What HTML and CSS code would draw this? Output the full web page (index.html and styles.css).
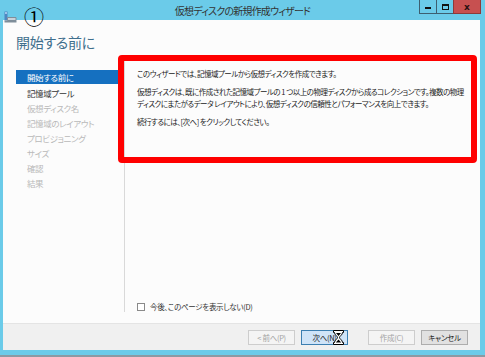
FILE: index.html
```html
<!DOCTYPE html>
<html lang="ja">
<head>
    <meta charset="UTF-8">
    <title>仮想ディスクの新規作成ウィザード</title>
    <link rel="stylesheet" href="styles.css">
</head>
<body>
    <div class="titlebar">
        <div class="app-icon">
            <svg width="13" height="12" viewBox="0 0 13 12">
                <rect x="0.5" y="0.5" width="3" height="9" fill="#4f86c0"/>
                <rect x="1" y="1" width="2" height="2" fill="#9cc3ea"/>
                <path d="M3.5 6.5 H12 V9.5 H3.5 Z" fill="#c9d2da" stroke="#7f8e9a" stroke-width="1"/>
                <rect x="0.5" y="9.5" width="12" height="2" fill="#7f8e9a"/>
            </svg>
        </div>
        <div class="title">仮想ディスクの新規作成ウィザード</div>
        <div class="controls">
            <span class="ctl ctl-min"><i></i></span>
            <span class="ctl ctl-max"><i></i></span>
            <span class="ctl ctl-close">x</span>
        </div>
    </div>

    <div class="client">
        <div class="header">
            <h1>開始する前に</h1>
        </div>
        <div class="main">
            <ul class="steps">
                <li class="current">開始する前に</li>
                <li class="done">記憶域プール</li>
                <li>仮想ディスク名</li>
                <li>記憶域のレイアウト</li>
                <li>プロビジョニング</li>
                <li>サイズ</li>
                <li>確認</li>
                <li>結果</li>
            </ul>
            <div class="content">
                <p>このウィザードでは、記憶域プールから仮想ディスクを作成できます。</p>
                <p>仮想ディスクは、既に作成された記憶域プールの 1 つ以上の物理ディスクから成るコレクションです。複数の物理ディスクにまたがるデータ レイアウトにより、仮想ディスクの信頼性とパフォーマンスを向上できます。</p>
                <p>続行するには、[次へ] をクリックしてください。</p>
                <label class="skip"><span class="box"></span>今後、このページを表示しない(D)</label>
            </div>
        </div>
        <div class="footer">
            <span class="btn disabled">&lt; 前へ(P)</span>
            <span class="btn primary">次へ(N)</span>
            <span class="btn disabled gap">作成(C)</span>
            <span class="btn">キャンセル</span>
        </div>
    </div>
    <div class="taskbar"></div>

    <!-- annotation overlays -->
    <div class="marker">①</div>
    <div class="highlight"></div>
    <svg class="cursor" width="11" height="15" viewBox="0 0 11 15">
        <path d="M0.5 0.5 H10.5 V2.5 H9.5 C9.5 5 6.5 6 6.5 7.5 C6.5 9 9.5 10 9.5 12.5 H10.5 V14.5 H0.5 V12.5 H1.5 C1.5 10 4.5 9 4.5 7.5 C4.5 6 1.5 5 1.5 2.5 H0.5 Z" fill="#fff" stroke="#000" stroke-width="1"/>
        <path d="M3 3 H8 L5.5 6 Z M2.8 12.5 L5.5 9.5 L8.2 12.5 Z" fill="#000"/>
    </svg>
</body>
</html>
```

FILE: styles.css
```css
* { box-sizing: border-box; }
body {
    margin: 0;
    width: 485px;
    height: 357px;
    overflow: hidden;
    position: relative;
    background: #6bcbe9;
    font-family: "Noto Sans CJK JP", "Noto Sans", sans-serif;
    font-feature-settings: "palt";
    color: #333;
}
.titlebar {
    height: 20px;
    display: grid;
    grid-template-columns: 1fr auto 1fr;
    align-items: start;
}
.app-icon { padding: 4px 0 0 4px; height: 16px; }
.title {
    font-size: 10px;
    letter-spacing: -0.8px;
    line-height: 22px;
    color: #333;
}
.controls {
    display: flex;
    justify-content: flex-end;
    padding-right: 4px;
}
.ctl {
    height: 14px;
    width: 18px;
    border: 1px solid #3d5f70;
    border-top: none;
    margin-left: -1px;
    display: flex;
    align-items: center;
    justify-content: center;
    font-family: "DejaVu Sans", sans-serif;
}
.ctl-min i { width: 6px; height: 2px; background: #111; margin-top: 3px; }
.ctl-max i { width: 7px; height: 6px; border: 1px solid #111; border-top-width: 2px; }
.ctl-close {
    width: 28px;
    background: #c75050;
    border-color: #8e3a3a;
    font-size: 9px;
    font-weight: bold;
    color: #2a1010;
    line-height: 12px;
}
.client {
    margin: 0 5px 0 3px;
    height: 330px;
    background: #fcfcfc;
    display: flex;
    flex-direction: column;
}
.header { height: 40px; padding: 14px 0 0 13px; }
.header h1 {
    margin: 0;
    font-size: 14px;
    letter-spacing: -0.3px;
    font-weight: normal;
    line-height: 17px;
    color: #3f6f8d;
}
.main {
    flex: 1;
    display: flex;
    padding-bottom: 11px;
}
.steps {
    list-style: none;
    margin: 0;
    padding: 10px 3px 0 13px;
    width: 122px;
    border-right: 1px solid #d9d9d9;
    font-size: 8.5px;
    letter-spacing: -0.4px;
}
.steps li {
    height: 15px;
    line-height: 15px;
    padding-left: 11px;
    color: #b9b9b9;
}
.steps li.current {
    height: 14px;
    line-height: 14px;
    margin-bottom: 2px;
    background: #1570c0;
    color: #fff;
}
.steps li.done { color: #333; }
.content {
    flex: 1;
    display: flex;
    flex-direction: column;
    padding: 8px 12px 0 12px;
    font-size: 7.5px;
    letter-spacing: -0.5px;
    line-height: 12px;
    color: #222;
}
.content p { margin: 0 0 6px; }
.skip {
    margin-top: auto;
    display: flex;
    align-items: center;
    height: 10px;
    font-size: 7.5px;
    letter-spacing: -0.3px;
    color: #333;
}
.skip .box {
    width: 8px;
    height: 8px;
    border: 1px solid #8a8a8a;
    background: #fff;
    margin-right: 5px;
}
.footer {
    height: 27px;
    background: #f0f0f0;
    border-top: 1px solid #e4e4e4;
    display: flex;
    justify-content: flex-end;
    align-items: flex-start;
    padding: 6px 12px 0 0;
    gap: 6px;
}
.btn {
    width: 47px;
    height: 15px;
    border: 1px solid #adadad;
    background: #e1e1e1;
    font-size: 7.5px;
    letter-spacing: -0.3px;
    line-height: 13px;
    text-align: center;
    color: #222;
}
.btn.disabled {
    border-color: #cdcdcd;
    background: #f4f4f4;
    color: #a3a3a3;
}
.btn.primary {
    border-color: #3c7fb1;
    background: #cfe4f8;
}
.btn.gap { margin-left: 14px; }
.taskbar {
    margin-top: 5px;
    height: 2px;
    background: #8b9aa3;
}
.marker {
    position: absolute;
    left: 24px;
    top: 5px;
    font-family: "Noto Sans CJK JP", sans-serif;
    font-size: 20px;
    line-height: 24px;
    color: #000;
}
.highlight {
    position: absolute;
    left: 118px;
    top: 55px;
    width: 359px;
    height: 108px;
    border: 6px solid #ff0000;
    border-radius: 4px;
}
.cursor {
    position: absolute;
    left: 333px;
    top: 330px;
}
```
